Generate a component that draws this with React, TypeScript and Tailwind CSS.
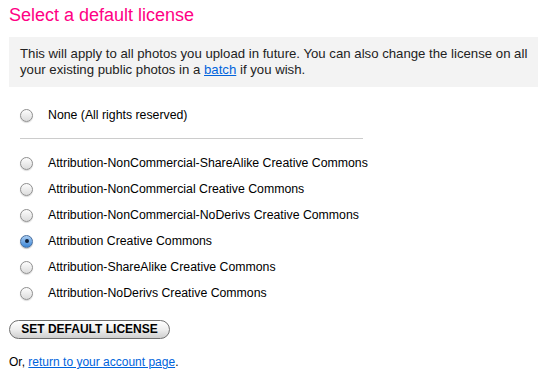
const licenses = [
  { id: "by-nc-sa", label: "Attribution-NonCommercial-ShareAlike Creative Commons" },
  { id: "by-nc", label: "Attribution-NonCommercial Creative Commons" },
  { id: "by-nc-nd", label: "Attribution-NonCommercial-NoDerivs Creative Commons" },
  { id: "by", label: "Attribution Creative Commons" },
  { id: "by-sa", label: "Attribution-ShareAlike Creative Commons" },
  { id: "by-nd", label: "Attribution-NoDerivs Creative Commons" },
];

const Radio = ({ checked }: { checked?: boolean }) =>
  checked ? (
    <span className="flex h-[13px] w-[13px] items-center justify-center rounded-full border border-[#4a6f9e] bg-gradient-to-b from-[#a9cdf2] to-[#3a86d6] shadow-[0_1px_1px_rgba(0,0,0,0.25)]">
      <span className="h-[4px] w-[4px] rounded-full bg-[#10213a]" />
    </span>
  ) : (
    <span className="block h-[13px] w-[13px] rounded-full border border-[#8f8f8f] bg-gradient-to-b from-[#fdfdfd] to-[#dcdcdc] shadow-[0_1px_1px_rgba(0,0,0,0.15)]" />
  );

const Row = ({ label, checked }: { label: string; checked?: boolean }) => (
  <label className="flex h-[26px] items-center">
    <span className="ml-[20px] w-[28px]">
      <Radio checked={checked} />
    </span>
    <span className="text-[12.3px] text-black">{label}</span>
  </label>
);

const App = () => {
  return (
    <div className="min-h-[379px] bg-white pl-[9px] pt-[3px] font-['Liberation_Sans',Arial,sans-serif]">
      <h1 className="text-[18px] leading-[24px] text-[#ff0084]">Select a default license</h1>

      <div className="mt-[10px] bg-[#f3f3f3] py-[9px] pl-[11px] pr-2 text-[13.2px] leading-[16px] text-[#222]">
        This will apply to all photos you upload in future. You can also change the license on all
        <br />
        your existing public photos in a{" "}
        <a href="#" className="text-[#0063dc] underline">
          batch
        </a>{" "}
        if you wish.
      </div>

      <div className="mt-[15px] -ml-[9px]">
        <Row label="None (All rights reserved)" />
      </div>

      <div className="mb-[11px] mt-[10px] ml-[11px] h-px w-[343px] bg-[#cccccc]" />

      <div className="-ml-[9px]">
        {licenses.map((license) => (
          <Row key={license.id} label={license.label} checked={license.id === "by"} />
        ))}
      </div>

      <button className="mt-[14px] h-[19px] w-[161px] rounded-full border border-[#6f6f6f] bg-gradient-to-b from-[#ffffff] via-[#eeeeee] to-[#cfcfcf] text-[12px] font-bold leading-[17px] text-black">
        SET DEFAULT LICENSE
      </button>

      <p className="mt-[13px] text-[12px] text-black">
        Or,{" "}
        <a href="#" className="text-[#0063dc] underline">
          return to your account page
        </a>
        .
      </p>
    </div>
  );
};

export default App;
